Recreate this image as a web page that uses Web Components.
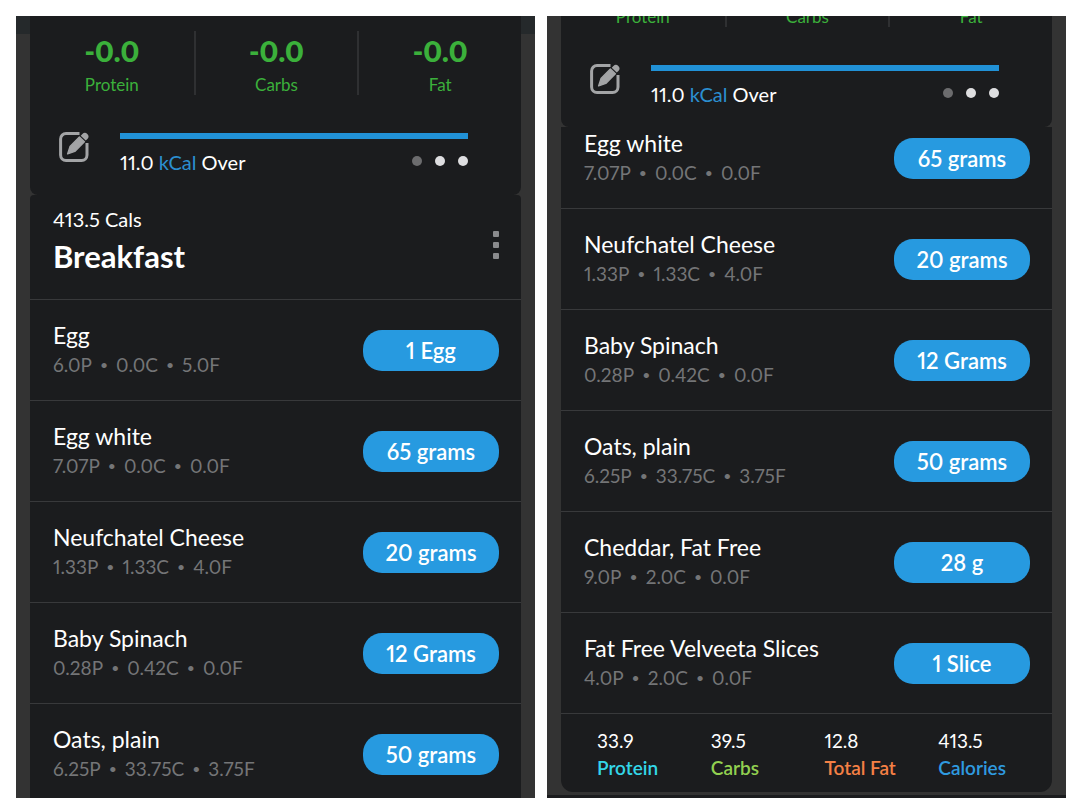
<!DOCTYPE html>
<html lang="en">
<head>
<meta charset="utf-8">
<meta name="viewport" content="width=device-width, initial-scale=1">
<title>Food diary</title>
<style>
    body
    {
        margin: 0;
        background-color: #fff;
        color: #fff;
        font-family: Lato, "Open Sans", sans-serif;
        font-variant-numeric: proportional-nums;
    }
    main
    {
        box-sizing: border-box;
        height: 100vh;
        display: grid;
        grid-template-columns: 1fr 1fr;
        gap: 12px;
        padding: 16px 14px 13px 16px;
    }
</style>
</head>
<body>
<main>
    <diary-screen class="top">
        <day-summary slot="summary"></day-summary>
        <meal-header cals="413.5">Breakfast</meal-header>
        <food-row amount="1 Egg" macros="6.0P 0.0C 5.0F">Egg</food-row>
        <food-row amount="65 grams" macros="7.07P 0.0C 0.0F">Egg white</food-row>
        <food-row amount="20 grams" macros="1.33P 1.33C 4.0F">Neufchatel Cheese</food-row>
        <food-row amount="12 Grams" macros="0.28P 0.42C 0.0F">Baby Spinach</food-row>
        <food-row amount="50 grams" macros="6.25P 33.75C 3.75F">Oats, plain</food-row>
    </diary-screen>
    <diary-screen class="scrolled">
        <day-summary slot="summary"></day-summary>
        <food-row amount="65 grams" macros="7.07P 0.0C 0.0F">Egg white</food-row>
        <food-row amount="20 grams" macros="1.33P 1.33C 4.0F">Neufchatel Cheese</food-row>
        <food-row amount="12 Grams" macros="0.28P 0.42C 0.0F">Baby Spinach</food-row>
        <food-row amount="50 grams" macros="6.25P 33.75C 3.75F">Oats, plain</food-row>
        <food-row amount="28 g" macros="9.0P 2.0C 0.0F">Cheddar, Fat Free</food-row>
        <food-row amount="1 Slice" macros="4.0P 2.0C 0.0F">Fat Free Velveeta Slices</food-row>
        <meal-totals>
            <total-item value="33.9" style="color: #33d6e8">Protein</total-item>
            <total-item value="39.5" style="color: #92d050">Carbs</total-item>
            <total-item value="12.8" style="color: #f58045">Total Fat</total-item>
            <total-item value="413.5" style="color: #2f9be0">Calories</total-item>
        </meal-totals>
    </diary-screen>
</main>

<script>
function makeTemplate(html)
{
    const template = document.createElement("template");
    template.innerHTML = html;
    return template;
}

// one phone screen: summary pinned on top, list clipped beneath it
const screenTemplate = makeTemplate(`
    <style>
        :host
        {
            display: block;
            box-sizing: border-box;
            min-width: 0;
            overflow: hidden;
            padding: 0 14px;
            background-color: #333;
        }
        :host(.top)
        {
            background-image: linear-gradient(#25292b, #25292b);
            background-size: 100% 18px;
            background-repeat: no-repeat;
        }
        :host(.scrolled)
        {
            border-bottom: 3px solid #1b1c1e;
        }
        :host(.scrolled) ::slotted(day-summary)
        {
            margin-top: -68px;
        }
        #list
        {
            overflow: hidden;
            border-radius: 4px 4px 0 0;
        }
        :host(.scrolled) #list
        {
            border-radius: 0 0 12px 12px;
        }
        :host(.scrolled) #rows
        {
            margin-top: -20px;
        }
    </style>
    <slot name="summary"></slot>
    <div id="list"><div id="rows"><slot></slot></div></div>
`);

class DiaryScreen extends HTMLElement
{
    constructor()
    {
        super();
        this.attachShadow({mode: "open"}).appendChild(screenTemplate.content.cloneNode(true));
    }
}

const summaryTemplate = makeTemplate(`
    <style>
        :host
        {
            display: block;
            background-color: #1b1c1e;
            border-radius: 0 0 8px 8px;
        }
        #macros
        {
            display: grid;
            grid-template-columns: repeat(3, 1fr);
            padding-top: 15px;
            color: #3bb03b;
            text-align: center;
        }
        #macros > div
        {
            height: 64px;
        }
        #macros > div + div
        {
            border-left: 2px solid #2f3032;
        }
        b
        {
            display: block;
            font-size: 28px;
            font-weight: 800;
            line-height: 40px;
        }
        #macros span
        {
            display: block;
            font-size: 17px;
            line-height: 28px;
        }
        #energy
        {
            display: flex;
            align-items: flex-start;
            gap: 30px;
            padding: 37px 53px 19px 29px;
        }
        button
        {
            width: 31px;
            height: 31px;
            padding: 0;
            border: none;
            background: none;
        }
        svg
        {
            display: block;
        }
        #progress
        {
            flex: 1;
            padding-top: 1px;
        }
        #bar
        {
            height: 6px;
            background-color: #2191d6;
        }
        #caption
        {
            display: flex;
            justify-content: space-between;
            padding-top: 9px;
            font-size: 20px;
            line-height: 28px;
        }
        em
        {
            font-style: normal;
            color: #2b8fd0;
        }
        #dots
        {
            display: flex;
            gap: 13px;
            padding-top: 8px;
        }
        #dots i
        {
            width: 10px;
            height: 10px;
            border-radius: 50%;
            background-color: #dedee0;
        }
        #dots i:first-child
        {
            background-color: #6c6c6e;
        }
    </style>
    <div id="macros">
        <div><b>-0.0</b><span>Protein</span></div>
        <div><b>-0.0</b><span>Carbs</span></div>
        <div><b>-0.0</b><span>Fat</span></div>
    </div>
    <div id="energy">
        <button type="button" aria-label="Edit">
            <svg width="31" height="31" viewBox="0 0 31 31">
                <path d="M20.5 1.6H7A5.4 5.4 0 0 0 1.6 7V23A5.4 5.4 0 0 0 7 28.4H22.6A5.4 5.4 0 0 0 28 23V11" fill="none" stroke="#a3a4a6" stroke-width="3"/>
                <path d="M8.6 21.9L11 14.6L20.4 5L25.4 9.8L15.8 19.4Z" fill="#a3a4a6" stroke="#a3a4a6" stroke-width="1.4" stroke-linejoin="round"/>
                <path d="M21.7 3.7L23.4 2.1A3.4 3.4 0 0 1 28.4 6.9L26.7 8.6Z" fill="#a3a4a6"/>
            </svg>
        </button>
        <div id="progress">
            <div id="bar"></div>
            <div id="caption">
                <div>11.0 <em>kCal</em> Over</div>
                <div id="dots"><i></i><i></i><i></i></div>
            </div>
        </div>
    </div>
`);

class DaySummary extends HTMLElement
{
    constructor()
    {
        super();
        this.attachShadow({mode: "open"}).appendChild(summaryTemplate.content.cloneNode(true));
    }
}

const mealTemplate = makeTemplate(`
    <style>
        :host
        {
            display: flex;
            justify-content: space-between;
            align-items: flex-start;
            padding: 10px 22px 23px 23px;
            background-color: #1b1c1e;
        }
        #cals
        {
            font-size: 20px;
            line-height: 28px;
        }
        h2
        {
            margin: 0;
            padding-top: 3px;
            font-size: 31px;
            font-weight: 700;
            line-height: 40px;
        }
        button
        {
            display: flex;
            flex-direction: column;
            align-items: center;
            gap: 5px;
            padding: 26px 0 0;
            border: none;
            background: none;
        }
        i
        {
            width: 6px;
            height: 6px;
            border-radius: 1px;
            background-color: #8a8b8d;
        }
    </style>
    <div>
        <div id="cals"></div>
        <h2><slot></slot></h2>
    </div>
    <button type="button" aria-label="Meal options"><i></i><i></i><i></i></button>
`);

class MealHeader extends HTMLElement
{
    constructor()
    {
        super();
        this.attachShadow({mode: "open"}).appendChild(mealTemplate.content.cloneNode(true));
    }

    connectedCallback()
    {
        this.shadowRoot.querySelector("#cals").textContent = this.getAttribute("cals") + " Cals";
    }
}

const rowTemplate = makeTemplate(`
    <style>
        :host
        {
            display: flex;
            justify-content: space-between;
            align-items: center;
            padding: 21px 22px 21px 23px;
            border-top: 1px solid #38393b;
            background-color: #1b1c1e;
            white-space: nowrap;
        }
        #name
        {
            font-size: 23px;
            line-height: 28px;
        }
        #macros
        {
            display: flex;
            gap: 8px;
            padding-top: 2px;
            font-size: 19px;
            line-height: 28px;
            color: #747577;
        }
        #macros i
        {
            font-size: 14px;
            font-style: normal;
        }
        button
        {
            width: 136px;
            height: 41px;
            padding: 0;
            border: none;
            border-radius: 19px;
            background-color: #279ae0;
            color: #fff;
            font: inherit;
            font-size: 22px;
            font-weight: 600;
        }
    </style>
    <div>
        <div id="name"><slot></slot></div>
        <div id="macros"></div>
    </div>
    <button type="button"></button>
`);

class FoodRow extends HTMLElement
{
    constructor()
    {
        super();
        this.attachShadow({mode: "open"}).appendChild(rowTemplate.content.cloneNode(true));
    }

    connectedCallback()
    {
        const parts = this.getAttribute("macros").split(" ");
        this.shadowRoot.querySelector("#macros").innerHTML =
            parts.map(p => `<span>${p}</span>`).join("<i>•</i>");
        this.shadowRoot.querySelector("button").textContent = this.getAttribute("amount");
    }
}

const totalsTemplate = makeTemplate(`
    <style>
        :host
        {
            display: grid;
            grid-template-columns: repeat(4, 1fr);
            padding: 13px 0 11px 36px;
            border-top: 1px solid #38393b;
            background-color: #1b1c1e;
        }
    </style>
    <slot></slot>
`);

class MealTotals extends HTMLElement
{
    constructor()
    {
        super();
        this.attachShadow({mode: "open"}).appendChild(totalsTemplate.content.cloneNode(true));
    }
}

const totalTemplate = makeTemplate(`
    <style>
        :host
        {
            display: block;
            font-size: 19px;
            line-height: 27px;
            font-weight: 600;
        }
        #value
        {
            color: #fff;
            font-weight: 400;
        }
    </style>
    <div id="value"></div>
    <slot></slot>
`);

class TotalItem extends HTMLElement
{
    constructor()
    {
        super();
        this.attachShadow({mode: "open"}).appendChild(totalTemplate.content.cloneNode(true));
    }

    connectedCallback()
    {
        this.shadowRoot.querySelector("#value").textContent = this.getAttribute("value");
    }
}

customElements.define("diary-screen", DiaryScreen);
customElements.define("day-summary", DaySummary);
customElements.define("meal-header", MealHeader);
customElements.define("food-row", FoodRow);
customElements.define("meal-totals", MealTotals);
customElements.define("total-item", TotalItem);
</script>
</body>
</html>
